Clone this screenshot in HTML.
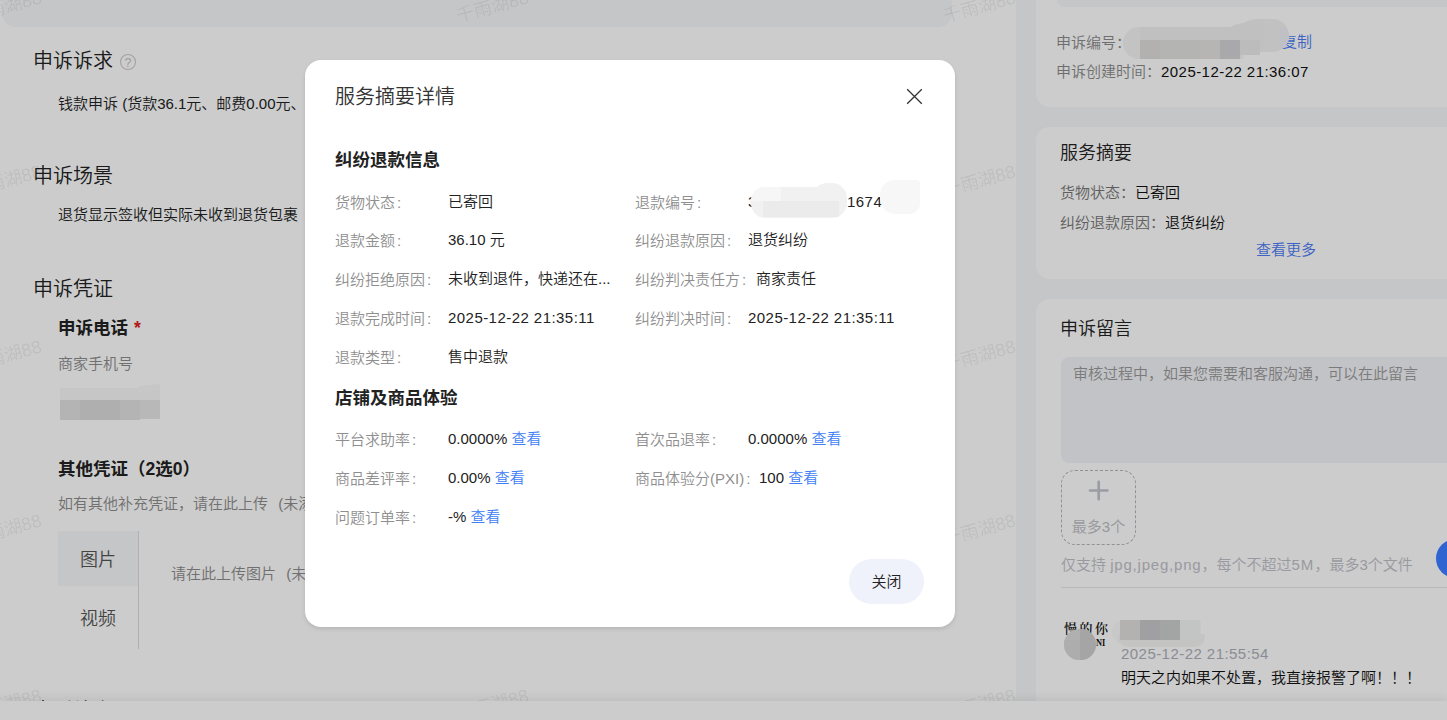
<!DOCTYPE html>
<html lang="zh-CN">
<head>
<meta charset="utf-8">
<title>服务摘要详情</title>
<style>
*{box-sizing:border-box;margin:0;padding:0}
html,body{width:1447px;height:720px;overflow:hidden;background:#f7f8fa}
body{font-weight:350;position:relative;font-family:"Liberation Sans","Noto Sans CJK SC",sans-serif;font-size:15px;color:#222}
.t{position:absolute;white-space:nowrap;line-height:20px;height:20px}
.abs{position:absolute}
/* ---------- underlying page ---------- */
#page{position:absolute;left:0;top:0;width:1447px;height:720px;overflow:hidden;background:#f7f8fa}
#left{position:absolute;left:0;top:0;width:1016px;height:720px;background:#fff}
#lefttop{position:absolute;left:2px;top:-30px;width:950px;height:56.7px;border-radius:14px;background:#f7f8fa}
.card{position:absolute;left:1036px;width:440px;background:#fff;border-radius:14px}
.h20{font-size:20px;line-height:26px;height:26px;color:#222}
.h18{font-size:18px;line-height:24px;height:24px;color:#222}
.b17{font-size:17.5px;font-weight:bold;line-height:24px;height:24px;color:#222}
.num{letter-spacing:.45px}
.g{color:#8c8c8c}
.lg{color:#a9abb3}
.blue{color:#4b7bf5}
.wm{position:absolute;white-space:nowrap;font-size:18px;line-height:20px;height:20px;color:rgba(0,0,0,.085);transform:rotate(-15.5deg);transform-origin:100% 50%}
/* ---------- overlay + modal ---------- */
#mask{position:absolute;left:0;top:0;width:1447px;height:720px;background:rgba(0,0,0,.2)}
#modal{position:absolute;left:305px;top:60px;width:650px;height:567px;background:#fff;border-radius:16px;box-shadow:0 2px 4px rgba(0,0,0,.11)}
#modal .t{color:#222}
#modal .lab{color:#8f8f8f}
#modal .lk{color:#4080f5}
#closebtn{position:absolute;left:544px;top:499px;width:75px;height:45px;border-radius:23px;background:#eff2fb;text-align:center;line-height:45px;font-size:15px;color:#222}
</style>
</head>
<body>
<div id="page">
  <div id="left">
    <div id="lefttop"></div>
    <!-- 申诉诉求 -->
    <div class="t h20" style="left:33px;top:48px">申诉诉求</div>
    <svg class="abs" style="left:118.8px;top:52.8px" width="18" height="18" viewBox="0 0 18 18"><circle cx="9" cy="9" r="7.5" fill="none" stroke="#cbcbcb" stroke-width="1.1"/><text x="9" y="13.6" font-size="12.5" text-anchor="middle" fill="#c4c4c4" font-family="Liberation Sans, sans-serif">?</text></svg>
    <div class="t" style="left:58px;top:93.5px">钱款申诉 (货款36.1元、邮费0.00元、运费险0.00元)</div>
    <!-- 申诉场景 -->
    <div class="t h20" style="left:33px;top:163px">申诉场景</div>
    <div class="t" style="left:58px;top:205px">退货显示签收但实际未收到退货包裹</div>
    <!-- 申诉凭证 -->
    <div class="t h20" style="left:33px;top:276px">申诉凭证</div>
    <div class="t b17" style="left:58px;top:316px">申诉电话 <span style="color:#e02020;margin-left:1px">*</span></div>
    <div class="t g" style="left:58px;top:354px">商家手机号</div>
    <div class="abs" style="left:60px;top:388px;width:100px;height:32px">
      <div class="abs" style="left:0;top:0;width:100px;height:12px;background:#f8f8f8"></div>
      <div class="abs" style="left:78px;top:-3px;width:22px;height:6px;background:#f9f9f9;transform:skewY(-7deg)"></div>
      <div class="abs" style="left:0;top:12px;width:20px;height:20px;background:#e2e2e2"></div>
      <div class="abs" style="left:20px;top:12px;width:40px;height:20px;background:#dbdbdb"></div>
      <div class="abs" style="left:60px;top:12px;width:20px;height:20px;background:#e1e1e1"></div>
      <div class="abs" style="left:80px;top:12px;width:20px;height:19px;background:#e6e6e6"></div>
    </div>
    <div class="t b17" style="left:58px;top:457px">其他凭证（2选0）</div>
    <div class="t g" style="left:58px;top:494px">如有其他补充凭证，请在此上传<span style="margin-left:6px"> (未添加)</span></div>
    <div class="abs" style="left:58px;top:531px;width:80px;height:55px;background:#f7f8fa"></div>
    <div class="abs" style="left:138px;top:531px;width:1px;height:118px;background:#dcdde0"></div>
    <div class="t" style="left:58px;top:548px;width:80px;text-align:center;font-size:18px;line-height:24px;height:24px;color:#555">图片</div>
    <div class="t" style="left:58px;top:607px;width:80px;text-align:center;font-size:18px;line-height:24px;height:24px;color:#555">视频</div>
    <div class="t g" style="left:171px;top:564px">请在此上传图片<span style="margin-left:6px"> (未添加)</span></div>
    <div class="t h20" style="left:33px;top:698px">申诉补充</div>
  </div>
  <!-- right column: card 1 -->
  <div class="card" style="top:-40px;height:147px">
    <div class="abs" style="left:21px;top:0;width:440px;height:47px;border-radius:8px;background:#f7f8fa"></div>
    <div class="t" style="left:20px;top:73px;color:#8a8a8a">申诉编号：</div>
    <div class="t blue" style="left:246px;top:72px">复制</div>
    <div class="abs" style="left:87px;top:59px;width:167px;height:41px">
      <div class="abs" style="left:0;top:8px;width:120px;height:32px;border-radius:16px 0 0 16px;background:#f4f4f4"></div>
      <div class="abs" style="left:17px;top:8px;width:100px;height:14px;background:#f0f0f0"></div>
      <div class="abs" style="left:112px;top:0;width:54px;height:33px;border-radius:22px 17px 17px 4px;background:#f2f2f3"></div>
      <div class="abs" style="left:100px;top:4px;width:40px;height:30px;border-radius:14px 0 0 0;background:#f1f1f1;transform:skewY(-12deg)"></div>
      <div class="abs" style="left:156px;top:7px;width:10px;height:22px;border-radius:0 12px 12px 0;background:#eef0f8"></div>
      <div class="abs" style="left:17px;top:21px;width:20px;height:19px;background:#dfdedc"></div>
      <div class="abs" style="left:37px;top:21px;width:20px;height:19px;background:#e2e1e0"></div>
      <div class="abs" style="left:57px;top:21px;width:20px;height:19px;background:#e1e1df"></div>
      <div class="abs" style="left:77px;top:21px;width:20px;height:19px;background:#e4e3e2"></div>
      <div class="abs" style="left:97px;top:21px;width:20px;height:19px;background:#d4d4d6"></div>
      <div class="abs" style="left:117px;top:21px;width:20px;height:15px;background:#ececec"></div>
    </div>
    <div class="t" style="left:20px;top:102px;color:#8a8a8a">申诉创建时间：</div>
    <div class="t num" style="left:125px;top:102px;color:#111">2025-12-22 21:36:07</div>
  </div>
  <!-- card 2 -->
  <div class="card" style="top:127px;height:152px">
    <div class="t h18" style="left:24px;top:14px">服务摘要</div>
    <div class="t" style="left:24px;top:56px"><span style="color:#777">货物状态：</span><span style="color:#111">已寄回</span></div>
    <div class="t" style="left:24px;top:86px"><span style="color:#777">纠纷退款原因：</span><span style="color:#111">退货纠纷</span></div>
    <div class="t blue" style="left:220px;top:113px">查看更多</div>
  </div>
  <!-- card 3 -->
  <div class="card" style="top:299px;height:460px">
    <div class="t h18" style="left:24px;top:18px">申诉留言</div>
    <div class="abs" style="left:25px;top:58px;width:440px;height:106px;border-radius:8px;background:#f3f4f8"></div>
    <div class="t" style="left:37px;top:65px;color:#999">审核过程中，如果您需要和客服沟通，可以在此留言</div>
    <div class="abs" style="left:25px;top:171px;width:75px;height:75px;border:1px dashed #b4b6bc;border-radius:14px"></div>
    <svg class="abs" style="left:51px;top:180px" width="23" height="23" viewBox="0 0 23 23"><path d="M11.7 2.8v17.4M3 11.5h17.4" stroke="#c2c5cf" stroke-width="2.7" stroke-linecap="round" fill="none"/></svg>
    <div class="t lg" style="left:25px;top:218px;width:75px;text-align:center;font-size:15px;color:#bcbec5">最多3个</div>
    <div class="t lg" style="left:25px;top:256px;color:#bfc1c8">仅支持 <span style="letter-spacing:.8px">jpg,jpeg,png</span>，每个不超过<span style="letter-spacing:1px">5M</span>，最多3个文件</div>
    <div class="abs" style="left:25px;top:288px;width:440px;height:1px;background:#e6e7ea"></div>
    <!-- message -->
    <div class="t" style="left:28px;top:321px;font-family:'Liberation Serif','Noto Serif CJK SC',serif;font-weight:600;font-size:13px;letter-spacing:2.5px;color:#111;line-height:18px;height:18px">慢的你</div>
    <div class="t" style="left:60px;top:337px;font-family:'Liberation Serif',serif;font-weight:bold;font-size:10.5px;color:#111;line-height:14px;height:14px;transform:scaleX(.8);transform-origin:left center">NI</div>
    <div class="abs" style="left:28px;top:329.5px;width:31.5px;height:31.5px;border-radius:50%;background:#dcdcdc;overflow:hidden"><div class="abs" style="left:16px;top:0;width:16px;height:32px;background:#cfcfcf"></div><div class="abs" style="left:0;top:11px;width:16px;height:21px;background:#d9d9d9"></div></div>
    <div class="abs" style="left:76px;top:321px;width:93px;height:28px">
      <div class="abs" style="left:0;top:0;width:89px;height:24px;border-radius:12px 3px 3px 12px;background:#fafafa"></div>
      <div class="abs" style="left:6px;top:14px;width:87px;height:13px;border-radius:3px 3px 13px 13px;background:#f5f5f4"></div>
      <div class="abs" style="left:8px;top:0;width:20px;height:20px;background:#e0dfdc"></div>
      <div class="abs" style="left:28px;top:0;width:20px;height:20px;background:#c8c8cb"></div>
      <div class="abs" style="left:48px;top:0;width:20px;height:20px;background:#cccecd"></div>
      <div class="abs" style="left:68px;top:0;width:20px;height:20px;background:#f4f6f5"></div>
    </div>
    <div class="t num" style="left:85px;top:345px;color:#adb0b9">2025-12-22 21:55:54</div>
    <div class="t" style="left:85px;top:369px;color:#111">明天之内如果不处置，我直接报警了啊！！！</div>
  </div>
  <!-- floating blue button -->
  <!-- watermarks -->
  <div class="wm" style="right:1405.5px;top:-13.3px">千雨湖88</div>
  <div class="wm" style="right:918.5px;top:-13.3px">千雨湖88</div>
  <div class="wm" style="right:431.7px;top:-13.3px">千雨湖88</div>
  <div class="wm" style="right:1405.5px;top:161.2px">千雨湖88</div>
  <div class="wm" style="right:918.5px;top:161.2px">千雨湖88</div>
  <div class="wm" style="right:431.7px;top:161.2px">千雨湖88</div>
  <div class="wm" style="right:1405.5px;top:335.7px">千雨湖88</div>
  <div class="wm" style="right:918.5px;top:335.7px">千雨湖88</div>
  <div class="wm" style="right:431.7px;top:335.7px">千雨湖88</div>
  <div class="wm" style="right:1405.5px;top:510.2px">千雨湖88</div>
  <div class="wm" style="right:918.5px;top:510.2px">千雨湖88</div>
  <div class="wm" style="right:431.7px;top:510.2px">千雨湖88</div>
  <div class="wm" style="right:1405.5px;top:684.7px">千雨湖88</div>
  <div class="wm" style="right:918.5px;top:684.7px">千雨湖88</div>
  <div class="wm" style="right:431.7px;top:684.7px">千雨湖88</div>
  <!-- bottom bar -->
  <div class="abs" style="left:0;top:701px;width:1447px;height:19px;background:#fff;box-shadow:0 -3px 8px rgba(0,0,0,.07)"></div>
</div>
<div id="mask"></div>
<div class="abs" style="left:1436px;top:538.5px;width:39px;height:39px;border-radius:50%;background:#3064d0"></div>
<div id="modal">
  <div class="t h20" style="left:30px;top:24px;color:#333">服务摘要详情</div>
  <svg class="abs" style="left:601px;top:27.5px" width="17" height="17" viewBox="0 0 17 17"><path d="M1.2 1.2L15.8 15.8M15.8 1.2L1.2 15.8" stroke="#333" stroke-width="1.3" fill="none"/></svg>
  <div class="t b17" style="left:30px;top:88px">纠纷退款信息</div>
  <!-- rows: left column -->
  <div class="t lab" style="left:30px;top:133px">货物状态<span style="margin-left:2px">:</span></div>
  <div class="t" style="left:143px;top:132px">已寄回</div>
  <div class="t lab" style="left:30px;top:171px">退款金额<span style="margin-left:2px">:</span></div>
  <div class="t" style="left:143px;top:170px">36.10 元</div>
  <div class="t lab" style="left:30px;top:210px">纠纷拒绝原因<span style="margin-left:2px">:</span></div>
  <div class="t" style="left:143px;top:209px">未收到退件，快递还在...</div>
  <div class="t lab" style="left:30px;top:249px">退款完成时间<span style="margin-left:2px">:</span></div>
  <div class="t num" style="left:143px;top:248px">2025-12-22 21:35:11</div>
  <div class="t lab" style="left:30px;top:288px">退款类型<span style="margin-left:2px">:</span></div>
  <div class="t" style="left:143px;top:287px">售中退款</div>
  <!-- rows: right column -->
  <div class="t lab" style="left:330px;top:133px">退款编号<span style="margin-left:2px">:</span></div>
  <div class="t" style="left:443px;top:132px">3</div><div class="t num" style="left:542px;top:132px">16743</div>
  <div class="abs" style="left:446px;top:127px;width:96px;height:31px;border-radius:15px 16px 16px 15px;background:#f1f1f1"></div>
  <div class="abs" style="left:505px;top:123px;width:37px;height:24px;border-radius:18px 15px 0 0;background:#f1f1f1"></div>
  <div class="abs" style="left:458px;top:141px;width:76px;height:16px;background:#ebebeb"></div>
  <div class="abs" style="left:446px;top:127px;width:30px;height:14px;border-radius:15px 0 0 0;background:#f6f6f6"></div>
  <div class="abs" style="left:575px;top:120px;width:40px;height:34px;border-radius:15px 4px 10px 16px;background:#f7f7f7"></div>
  <div class="t lab" style="left:330px;top:171px">纠纷退款原因<span style="margin-left:2px">:</span></div>
  <div class="t" style="left:443px;top:170px">退货纠纷</div>
  <div class="t lab" style="left:330px;top:210px">纠纷判决责任方<span style="margin-left:2px">:</span></div>
  <div class="t" style="left:451px;top:209px">商家责任</div>
  <div class="t lab" style="left:330px;top:249px">纠纷判决时间<span style="margin-left:2px">:</span></div>
  <div class="t num" style="left:443px;top:248px">2025-12-22 21:35:11</div>
  <!-- section 2 -->
  <div class="t b17" style="left:30px;top:326px">店铺及商品体验</div>
  <div class="t lab" style="left:30px;top:370px">平台求助率<span style="margin-left:2px">:</span></div>
  <div class="t" style="left:143px;top:369px">0.0000% <span class="lk">查看</span></div>
  <div class="t lab" style="left:30px;top:409px">商品差评率<span style="margin-left:2px">:</span></div>
  <div class="t" style="left:143px;top:408px">0.00% <span class="lk">查看</span></div>
  <div class="t lab" style="left:30px;top:448px">问题订单率<span style="margin-left:2px">:</span></div>
  <div class="t" style="left:143px;top:447px">-% <span class="lk">查看</span></div>
  <div class="t lab" style="left:330px;top:370px">首次品退率<span style="margin-left:2px">:</span></div>
  <div class="t" style="left:443px;top:369px">0.0000% <span class="lk">查看</span></div>
  <div class="t lab" style="left:330px;top:409px">商品体验分(PXI)<span style="margin-left:2px">:</span></div>
  <div class="t" style="left:454px;top:408px">100 <span class="lk">查看</span></div>
  <div id="closebtn">关闭</div>
</div>
</body>
</html>
